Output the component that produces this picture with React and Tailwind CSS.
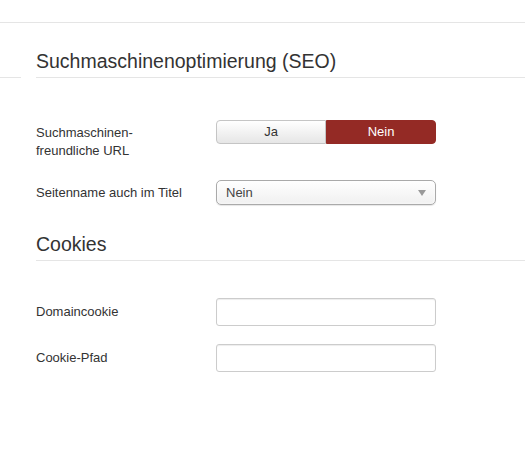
export default function App() {
  return (
    <div className="min-h-[451px] bg-white font-['Liberation_Sans',Arial,sans-serif] text-[13px] text-[#333]">
      <div className="h-[23px] border-b border-[#e5e5e5]" />
      <div className="flex">
        <div className="h-[55px] w-[21px] shrink-0 border-b border-[#e5e5e5]" />
        <div className="ml-[15px] flex-1">
          <section>
            <h2 className="mt-[18px] border-b border-[#e5e5e5] pt-[5px] text-[19.5px] leading-[31px] text-[#333]">
              Suchmaschinenoptimierung (SEO)
            </h2>
            <div className="mt-[42px] flex">
              <label className="w-[180px] shrink-0 pt-[4px] pr-[20px] leading-[18px]">
                Suchmaschinen-
                <br />
                freundliche URL
              </label>
              <div className="flex h-[24px] w-[220px]">
                <button className="flex-1 rounded-l-[4px] border border-[#c5c5c5] bg-gradient-to-b from-white to-[#e6e6e6] text-[13px] text-[#333]">
                  Ja
                </button>
                <button className="flex-1 rounded-r-[4px] border border-[#942a25] bg-[#942a25] text-[13px] text-white">
                  Nein
                </button>
              </div>
            </div>
            <div className="mt-[20px] flex items-center">
              <label className="w-[180px] shrink-0">Seitenname auch im Titel</label>
              <div className="flex h-[25px] w-[220px] items-center justify-between rounded-[5px] border border-[#aaa] bg-gradient-to-b from-white to-[#f0f0f0] pr-[9px] pl-[9px] text-[13px] text-[#444] shadow-[0_0_3px_white_inset,0_1px_1px_rgba(0,0,0,0.1)]">
                <span>Nein</span>
                <svg width="8" height="6" viewBox="0 0 8 6">
                  <path d="M0 0 L8 0 L4 6 Z" fill="#999" />
                </svg>
              </div>
            </div>
          </section>
          <section>
            <h2 className="mt-[19px] border-b border-[#e5e5e5] pt-[5px] text-[19.5px] leading-[31px] text-[#333]">
              Cookies
            </h2>
            <div className="mt-[37px] flex items-center">
              <label className="w-[180px] shrink-0">Domaincookie</label>
              <input
                type="text"
                className="h-[28px] w-[220px] rounded-[3px] border border-[#ccc] bg-white shadow-[inset_0_1px_1px_rgba(0,0,0,0.075)]"
              />
            </div>
            <div className="mt-[18px] flex items-center">
              <label className="w-[180px] shrink-0">Cookie-Pfad</label>
              <input
                type="text"
                className="h-[28px] w-[220px] rounded-[3px] border border-[#ccc] bg-white shadow-[inset_0_1px_1px_rgba(0,0,0,0.075)]"
              />
            </div>
          </section>
        </div>
      </div>
    </div>
  );
}
